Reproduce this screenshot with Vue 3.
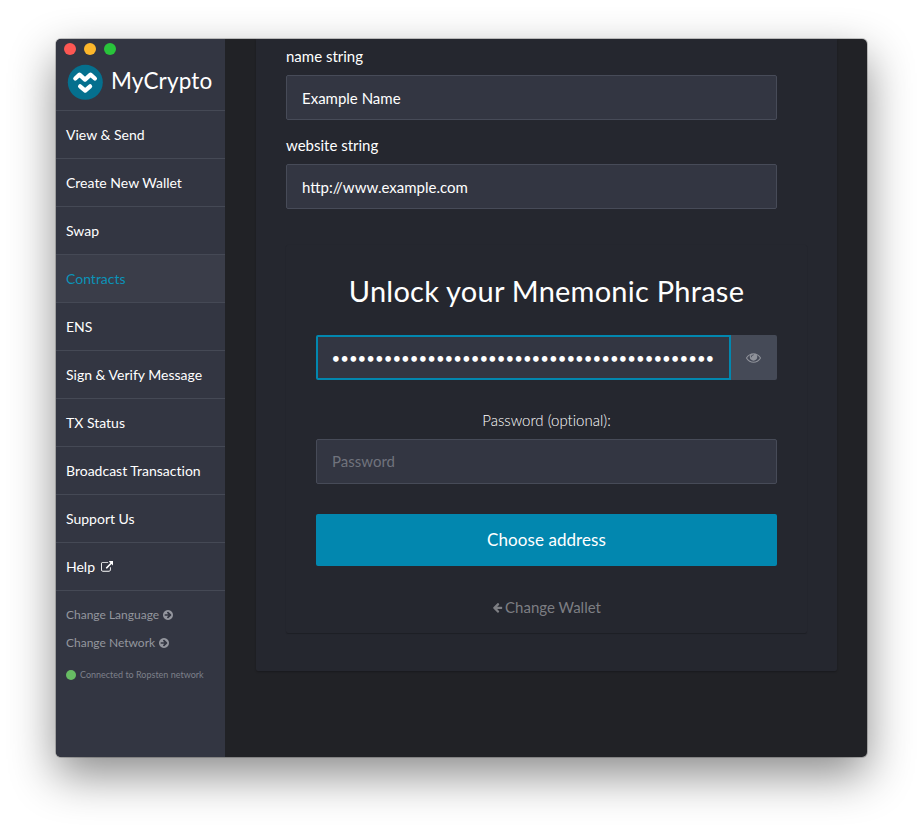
<script setup>
import { ref } from 'vue'

const links = ['View & Send', 'Create New Wallet', 'Swap', 'Contracts', 'ENS', 'Sign & Verify Message', 'TX Status', 'Broadcast Transaction', 'Support Us', 'Help']
const active = ref('Contracts')
const fields = ref([
  { label: 'name string', value: 'Example Name' },
  { label: 'website string', value: 'http://www.example.com' },
])
const phrase = ref('x'.repeat(44))
const password = ref('')
const arrowCircle = 'M1413 896q0-27-18-45l-91-91-362-362q-18-18-45-18t-45 18l-91 91q-18 18-18 45t18 45l189 189h-502q-26 0-45 19t-19 45v128q0 26 19 45t45 19h502l-189 189q-19 19-19 45t19 45l91 91q18 18 45 18t45-18l362-362 91-91q18-18 18-45zm251 0q0 209-103 385.500t-279.500 279.500-385.500 103-385.500-103-279.500-279.500-103-385.500 103-385.500 279.500-279.500 385.500-103 385.500 103 279.500 279.500 103 385.500z'
</script>

<template>
  <div class="desktop">
    <div class="window">
      <aside class="sidebar">
        <div class="lights"><i class="red"></i><i class="yellow"></i><i class="green"></i></div>
        <div class="brand">
          <svg class="mark" viewBox="0 0 36 36">
            <circle cx="18.300" cy="18.300" r="17.500" fill="#05708e" />
            <path d="M8.300 14.500L12.500 10.600L18 15.600L23.500 10.600L27.900 14.500M13.100 22.300L18.200 26.600L23.100 22.300" fill="none" stroke="#fff" stroke-width="4.200" stroke-linecap="round" stroke-linejoin="round" />
          </svg>
          <span class="name">MyCrypto</span>
        </div>
        <nav>
          <a v-for="l in links" :key="l" class="link" :class="{ active: l === active }" @click="active = l">
            <span>{{ l }}</span>
            <svg v-if="l === 'Help'" class="ext" viewBox="0 0 1792 1792"><path fill="currentColor" d="M1408 928v320q0 119-84.500 203.500t-203.500 84.500h-832q-119 0-203.500-84.500t-84.500-203.500v-832q0-119 84.500-203.500t203.500-84.500h704q14 0 23 9t9 23v64q0 14-9 23t-23 9h-704q-66 0-113 47t-47 113v832q0 66 47 113t113 47h832q66 0 113-47t47-113v-320q0-14 9-23t23-9h64q14 0 23 9t9 23zm384-864v512q0 26-19 45t-45 19-45-19l-176-176-652 652q-10 10-23 10t-23-10l-114-114q-10-10-10-23t10-23l652-652-176-176q-19-19-19-45t19-45 45-19h512q26 0 45 19t19 45z" /></svg>
          </a>
        </nav>
        <div class="options">
          <a v-for="o in ['Change Language', 'Change Network']" :key="o">
            <span>{{ o }}</span>
            <svg viewBox="128 128 1536 1536"><path fill="currentColor" :d="arrowCircle" /></svg>
          </a>
        </div>
        <div class="status"><i></i><span>Connected to Ropsten network</span></div>
      </aside>
      <main class="content">
        <section class="card">
          <label v-for="f in fields" :key="f.label" class="field">
            <span>{{ f.label }}</span>
            <input v-model="f.value" type="text" />
          </label>
          <form class="unlock" @submit.prevent>
            <h2>Unlock your Mnemonic Phrase</h2>
            <div class="phrase">
              <input v-model="phrase" class="focused" type="password" />
              <button type="button" class="reveal">
                <svg viewBox="0 0 1792 1792"><path fill="currentColor" d="M1664 960q-152-236-381-353 61 104 61 225 0 185-131.500 316.500t-316.500 131.500-316.500-131.500-131.500-316.500q0-121 61-225-229 117-381 353 133 205 333.500 326.500t434.500 121.500 434.500-121.500 333.500-326.500zm-720-384q0-20-14-34t-34-14q-125 0-214.500 89.500t-89.500 214.500q0 20 14 34t34 14 34-14 14-34q0-86 61-147t147-61q20 0 34-14t14-34zm848 384q0 34-20 69-140 230-376.500 368.500t-499.500 138.500-499.500-139-376.500-368q-20-35-20-69t20-69q140-229 376.500-368t499.500-139 499.500 139 376.500 368q20 35 20 69z" /></svg>
              </button>
            </div>
            <div class="hint">Password (optional):</div>
            <input v-model="password" class="optional" type="password" placeholder="Password" />
            <button type="submit" class="primary">Choose address</button>
            <a class="back">
              <svg viewBox="0 0 1792 1792"><path fill="currentColor" d="M1664 896v128q0 53-32.500 90.500t-84.500 37.500h-704l293 294q38 36 38 90t-38 90l-75 76q-37 37-90 37-52 0-91-37l-651-652q-37-37-37-90 0-52 37-91l651-650q38-38 91-38 52 0 90 38l75 74q38 38 38 91t-38 91l-293 293h704q52 0 84.500 37.500t32.500 90.500z" /></svg>
              <span>Change Wallet</span>
            </a>
          </form>
        </section>
      </main>
    </div>
  </div>
</template>

<style>
html, body { margin: 0; background: #fff; overflow: hidden; }
</style>

<style scoped>
* { box-sizing: border-box; }
.desktop {
  width: 923px; height: 832px; padding: 39px 56px 0; overflow: hidden;
  font-family: Lato, sans-serif; font-variant-ligatures: no-common-ligatures; color: #fff; background: #fff;
}
.window {
  display: flex; width: 811px; height: 718px; border-radius: 5px; overflow: hidden; background: #212226;
  box-shadow: 0 0 0 1px rgba(0, 0, 0, .2), 0 18px 46px rgba(0, 0, 0, .46);
}
.sidebar { width: 169px; flex: none; background: #333642; }
.lights { display: flex; gap: 8px; padding: 4px 0 0 8px; }
.lights i { width: 12px; height: 12px; border-radius: 50%; }
.red { background: #fc5753; }
.yellow { background: #fdb72b; }
.green { background: #29c43b; }
.brand { display: flex; align-items: center; height: 55px; padding: 0 0 2px 11px; }
.mark { width: 36px; height: 36px; }
.name { padding-bottom: 1px; margin-left: 8px; font-size: 22.5px; line-height: 30px; letter-spacing: .15px; }
.link {
  display: flex; align-items: center; height: 48px; padding: 0 10px;
  border-top: 1px solid #454955; font-size: 14px;
}
.link:last-child { height: 49px; border-bottom: 1px solid #454955; }
.link.active { background: #3a3d49; color: #0b93b8; }
.ext { width: 12.5px; height: 12.5px; margin: 1px 0 0 5.5px; }
.options { padding: 9px 10px 0; color: #94969e; font-size: 12px; }
.options a { display: flex; align-items: center; height: 28px; }
.options svg { width: 10px; height: 10px; margin: 1px 0 0 3.5px; }
.status { display: flex; align-items: center; height: 14px; margin: 12px 10px 0; font-size: 9px; color: #7d808a; }
.status i { width: 10px; height: 10px; margin-right: 4px; border-radius: 50%; background: #67bc63; }
.status span { padding-bottom: 1px; }
.content { flex: 1; padding: 0 30px 0 31px; }
.card {
  height: 632px; padding: 7px 30px 0; background: #25272f; border-radius: 0 0 2px 2px;
  box-shadow: 0 1px 2px rgba(0, 0, 0, .25);
}
.field { display: block; width: 491px; height: 89px; }
.field span { display: block; height: 29px; font-size: 15px; line-height: 20px; }
input {
  display: block; width: 100%; height: 45px; padding: 0 15px; border: 1px solid #474b58; border-radius: 2px;
  background: #333642; color: #fff; font: 15px Lato, sans-serif; outline: none;
}
input::placeholder { color: #70737d; opacity: 1; }
.optional { padding-bottom: 2px; }
.unlock {
  height: 388px; margin-top: 21px; padding: 26px 30px 0; border-radius: 2px;
  box-shadow: 0 1px 1px rgba(0, 0, 0, .2), 0 0 1px rgba(0, 0, 0, .06);
}
h2 { margin: 0 0 24px; font-size: 29px; font-weight: 400; line-height: 40px; letter-spacing: .23px; text-align: center; }
.phrase { display: flex; }
.phrase input { flex: 1; width: auto; min-width: 0; border-radius: 2px 0 0 2px; }
.phrase .focused { border: 2px solid #0287af; padding: 0 13px 0 13.5px; }
.reveal {
  display: flex; align-items: center; justify-content: center; width: 46px; height: 45px; padding: 0 1px 0 0;
  border: 0; border-radius: 0 2px 2px 0; background: #454a57; color: #8f929a;
}
.reveal svg { width: 15px; height: 15px; }
.hint { height: 20px; margin: 30px 0 9px; font-size: 15px; font-weight: 300; line-height: 20px; text-align: center; }
.primary {
  display: block; width: 100%; height: 52px; margin-top: 30px; padding: 0 0 2px; border: 0; border-radius: 2px;
  background: #0287af; color: #fff; font: 17px Lato, sans-serif; letter-spacing: .08px;
}
.back { display: flex; align-items: center; justify-content: center; height: 20px; margin-top: 31px; font-size: 15px; color: #7d7e83; }
.back svg { width: 11px; height: 11px; margin-right: 2px; }
</style>
